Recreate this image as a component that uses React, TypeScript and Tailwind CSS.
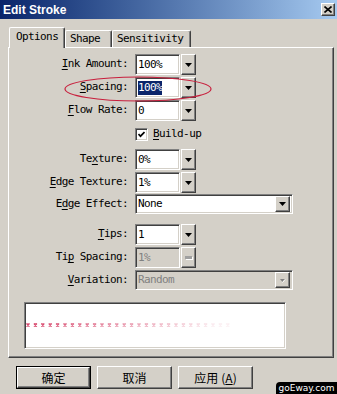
import React from "react"

const mono = "font-['DejaVu_Sans_Mono',monospace] text-[11px] tracking-[-0.6px]"
const sunken =
  "border border-t-[#808080] border-l-[#808080] border-b-white border-r-white shadow-[inset_1px_1px_0_#404040,inset_-1px_-1px_0_#d4d0c8]"
const raised =
  "border border-t-white border-l-white border-b-[#404040] border-r-[#404040] shadow-[inset_-1px_-1px_0_#808080] bg-[#d4d0c8]"

// label text with one access-key letter underlined
function Lbl({ text, u }: { text: string; u: number }) {
  return (
    <>
      {text.slice(0, u)}
      <span className="underline underline-offset-2">{text[u]}</span>
      {text.slice(u + 1)}
    </>
  )
}

function Arrow({ disabled }: { disabled?: boolean }) {
  if (disabled) {
    return (
      <svg width="7" height="5" viewBox="0 0 7 5">
        <path d="M1 1h5l-2.5 3z" fill="#808080" />
        <path d="M6 1.5L3.5 4.5" stroke="white" strokeWidth="1" />
      </svg>
    )
  }
  return (
    <svg width="7" height="4" viewBox="0 0 7 4">
      <path d="M0 0h7L3.5 4z" fill="black" />
    </svg>
  )
}

function DropBtn({ disabled, bar }: { disabled?: boolean; bar?: boolean }) {
  return (
    <div className={`ml-[1px] w-[15px] h-full ${raised} flex items-center justify-center`}>
      {bar ? (
        <div className="w-[7px] h-[3px] bg-[#a0a0a0] shadow-[1px_1px_0_white]" />
      ) : (
        <Arrow disabled={disabled} />
      )}
    </div>
  )
}

function Combo({ value, selected, disabled }: { value: string; selected?: boolean; disabled?: boolean }) {
  return (
    <div className="flex h-[21px]">
      <div
        className={`w-[45px] h-full ${sunken} ${disabled ? "bg-[#d4d0c8] text-[#808080]" : "bg-white text-black"} flex items-center pl-[2px]`}
      >
        <span className={selected ? "bg-[#0a246a] text-white leading-[14px]" : "leading-[14px]"}>{value}</span>
      </div>
      <DropBtn bar={disabled} />
    </div>
  )
}

function Select({ value, disabled }: { value: string; disabled?: boolean }) {
  return (
    <div
      className={`w-[158px] h-[20px] ${sunken} ${disabled ? "bg-[#d4d0c8] text-[#808080]" : "bg-white text-black"} flex items-center pl-[2px] pr-[2px]`}
    >
      <span className="flex-1">{value}</span>
      <div className={`w-[15px] h-[16px] ${raised} flex items-center justify-center`}>
        <Arrow disabled={disabled} />
      </div>
    </div>
  )
}

function Row({ label, u, children, className = "" }: { label: string; u: number; children: React.ReactNode; className?: string }) {
  return (
    <div className={`flex items-center ${className}`}>
      <div className="w-[119px] text-right whitespace-pre">
        <Lbl text={label} u={u} />
      </div>
      <div className="ml-[7px]">{children}</div>
    </div>
  )
}

const dots = Array.from({ length: 28 }, (_, i) => i)

export default function App() {
  return (
    <div className="relative w-[337px] h-[394px] bg-[#d4d0c8] overflow-hidden">
      {/* title bar */}
      <div className="h-[19px] bg-linear-to-r from-[#0a246a] to-[#a6caf0] flex items-center pl-[3px] pr-[2px]">
        <span className="flex-1 text-white font-bold text-[12px] font-['Liberation_Sans',sans-serif] leading-none">
          Edit Stroke
        </span>
        <div className={`w-[14px] h-[13px] ${raised} flex items-center justify-center`}>
          <svg width="8" height="7" viewBox="0 0 8 7">
            <path d="M0.5 0.5l7 6M7.5 0.5l-7 6" stroke="black" strokeWidth="1.6" />
          </svg>
        </div>
      </div>

      <div className={`pl-[8px] pt-[8px] ${mono} text-black`}>
        {/* tabs */}
        <div className="flex items-end h-[20px] pl-[1px]">
          <div className="relative z-10 -mb-px h-[21px] w-[56px] bg-[#d4d0c8] border-t border-l border-r border-t-white border-l-white border-r-[#404040] shadow-[inset_-1px_0_0_#808080] rounded-tl-[2px] rounded-tr-[2px] flex items-center pl-[6px] pb-[2px]">
            Options
          </div>
          <div className="h-[17px] w-[47px] border-t border-l border-r border-t-white border-l-white border-r-[#404040] shadow-[inset_-1px_0_0_#808080] rounded-tl-[2px] rounded-tr-[2px] flex items-center pl-[4px]">
            Shape
          </div>
          <div className="h-[17px] w-[79px] border-t border-l border-r border-t-white border-l-white border-r-[#404040] shadow-[inset_-1px_0_0_#808080] rounded-tl-[2px] rounded-tr-[2px] flex items-center pl-[4px]">
            Sensitivity
          </div>
        </div>

        {/* tab panel */}
        <div className="w-[326px] h-[311px] border border-t-white border-l-white border-b-[#404040] border-r-[#404040] shadow-[inset_-1px_-1px_0_#808080] pt-[6px]">
          <Row label="Ink Amount:" u={0}>
            <Combo value="100%" />
          </Row>
          <Row label="Spacing:" u={0} className="mt-[2px]">
            <Combo value="100%" selected />
          </Row>
          <Row label="Flow Rate:" u={0} className="mt-[2px]">
            <Combo value="0" />
          </Row>
          <div className="mt-[7px] ml-[126px] flex items-center h-[13px]">
            <div className={`w-[13px] h-[13px] bg-white ${sunken} flex items-center justify-center`}>
              <svg width="7" height="7" viewBox="0 0 7 7">
                <path d="M0.5 3l2 2.2L6.5 1" stroke="black" strokeWidth="1.7" fill="none" />
              </svg>
            </div>
            <span className="ml-[5px]">
              <Lbl text="Build-up" u={0} />
            </span>
          </div>
          <Row label="Texture:" u={2} className="mt-[8px]">
            <Combo value="0%" />
          </Row>
          <Row label="Edge Texture:" u={0} className="mt-[2px]">
            <Combo value="1%" />
          </Row>
          <Row label="Edge Effect:" u={1} className="mt-[1px]">
            <Select value="None" />
          </Row>
          <Row label="Tips:" u={0} className="mt-[10px]">
            <Combo value="1" />
          </Row>
          <Row label="Tip Spacing:" u={2} className="mt-[2px]">
            <Combo value="1%" disabled />
          </Row>
          <Row label="Variation:" u={0} className="mt-[2px]">
            <Select value="Random" disabled />
          </Row>

          {/* stroke preview */}
          <div className={`mt-[12px] ml-[15px] w-[262px] h-[47px] bg-white ${sunken}`}>
            <svg width="258" height="43" viewBox="0 0 258 43">
              {dots.map((i) => {
                const x = 3 + i * 7.4
                const op = Math.max(0.08, 1 - i / 28)
                return (
                  <g key={i} opacity={op}>
                    <path
                      d={`M${x - 1.5} ${20.5}l3 3m0 -3l-3 3`}
                      stroke="#d0305a"
                      strokeWidth="1.2"
                    />
                    <rect x={x - 0.5} y={20} width="1" height="4" fill="#e06080" />
                  </g>
                )
              })}
            </svg>
          </div>
        </div>

        {/* dialog buttons */}
        <div className="mt-[8px] ml-[8px] flex gap-[6px] font-['Noto_Sans_CJK_SC',sans-serif] text-[12px] tracking-normal">
          <div className="w-[75px] h-[23px] border border-black">
            <div className={`w-full h-full ${raised} flex items-center justify-center`}>确定</div>
          </div>
          <div className={`w-[75px] h-[23px] ${raised} flex items-center justify-center`}>取消</div>
          <div className={`w-[75px] h-[23px] ${raised} flex items-center justify-center`}>
            应用
            <span className="ml-[3px]">
              (<span className="underline">A</span>)
            </span>
          </div>
        </div>
      </div>

      {/* red highlight ellipse drawn over the Spacing row */}
      <svg className="absolute left-0 top-0 pointer-events-none" width="337" height="394">
        <ellipse cx="138" cy="89" rx="73" ry="12" fill="none" stroke="#c81e3c" strokeWidth="1.2" />
      </svg>

      {/* watermark */}
      <div className="absolute right-0 bottom-0 h-[12px] w-[61px] bg-black rounded-tl-[4px] flex items-center justify-center text-white text-[9px] font-['DejaVu_Sans',sans-serif] leading-none">
        goEway.com
      </div>
    </div>
  )
}
